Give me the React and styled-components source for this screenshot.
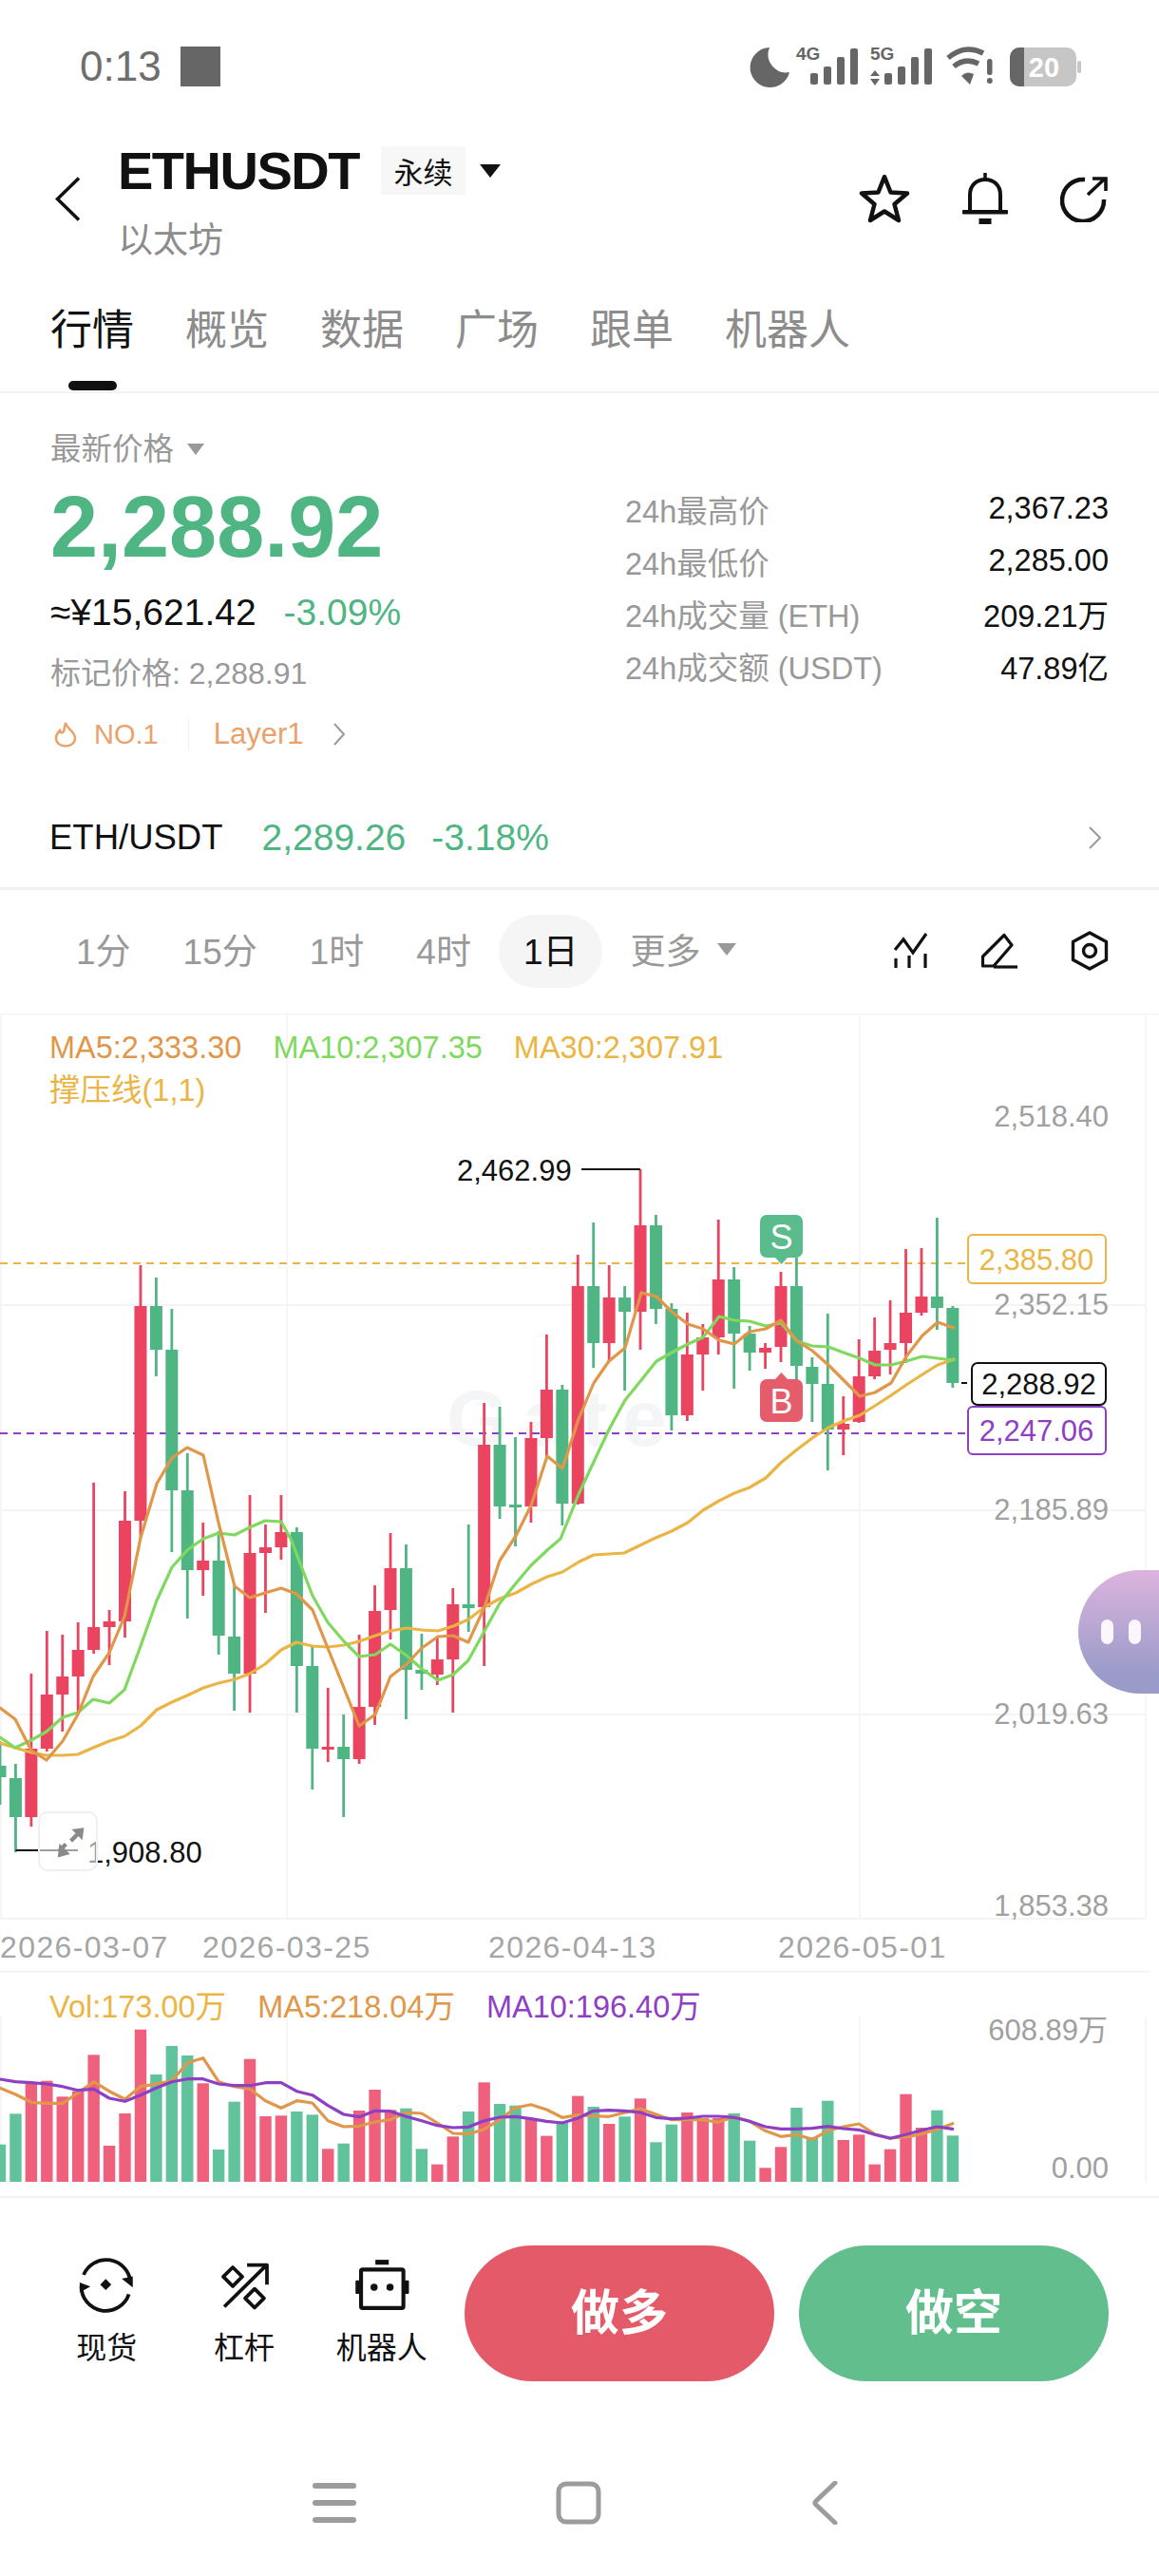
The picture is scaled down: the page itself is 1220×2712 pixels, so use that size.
import React from 'react';
import styled, { createGlobalStyle } from 'styled-components';

const FONT = '"Liberation Sans", "Noto Sans CJK SC", sans-serif';
const RED = '#eb4460';
const GREEN = '#4fb583';
const GRAY = '#999999';
const ORANGE = '#e0974a';
const LIME = '#7fd95f';
const YELLOW = '#ebb545';
const PURPLE = '#8e3fc4';
const STEP = 16.44;

// [colour, wick top, body top, body bottom, wick bottom], all in page pixels
const CANDLES = [
  ['g', 1833, 1859, 1871, 1900], ['g', 1857, 1872, 1913, 1950], ['r', 1762, 1841, 1913, 1923], ['r', 1717, 1784, 1841, 1844],
  ['r', 1721, 1765, 1784, 1823], ['r', 1708, 1737, 1765, 1802], ['r', 1561, 1713, 1737, 1741], ['r', 1695, 1707, 1713, 1753],
  ['r', 1570, 1601, 1707, 1724], ['r', 1332, 1375, 1601, 1619], ['g', 1345, 1375, 1421, 1449], ['g', 1378, 1421, 1569, 1634],
  ['g', 1530, 1569, 1653, 1704], ['r', 1603, 1643, 1653, 1680], ['g', 1612, 1643, 1722, 1742], ['g', 1670, 1723, 1762, 1801],
  ['r', 1574, 1635, 1762, 1803], ['r', 1605, 1629, 1635, 1698], ['r', 1574, 1613, 1629, 1642], ['g', 1608, 1613, 1754, 1803],
  ['g', 1733, 1754, 1841, 1884], ['r', 1777, 1839, 1842, 1855], ['g', 1805, 1839, 1852, 1913], ['r', 1721, 1797, 1852, 1857],
  ['r', 1669, 1696, 1797, 1816], ['r', 1614, 1651, 1695, 1726], ['g', 1626, 1651, 1758, 1810], ['g', 1720, 1758, 1762, 1779],
  ['r', 1723, 1747, 1763, 1774], ['r', 1672, 1689, 1747, 1803], ['g', 1605, 1689, 1693, 1718], ['r', 1477, 1521, 1692, 1754],
  ['g', 1481, 1521, 1586, 1599], ['g', 1513, 1584, 1587, 1628], ['r', 1497, 1514, 1586, 1603], ['r', 1405, 1463, 1514, 1535],
  ['g', 1458, 1463, 1583, 1606], ['r', 1321, 1354, 1583, 1584], ['g', 1287, 1354, 1414, 1440], ['r', 1332, 1366, 1414, 1433],
  ['g', 1354, 1366, 1381, 1464], ['r', 1231, 1290, 1381, 1421], ['g', 1279, 1290, 1378, 1394], ['g', 1372, 1378, 1490, 1506],
  ['r', 1382, 1426, 1490, 1496], ['r', 1394, 1408, 1426, 1464], ['r', 1284, 1347, 1408, 1426], ['g', 1334, 1347, 1404, 1462],
  ['g', 1396, 1404, 1424, 1443], ['r', 1414, 1419, 1424, 1441], ['r', 1339, 1354, 1418, 1434], ['g', 1324, 1354, 1438, 1453],
  ['g', 1429, 1439, 1457, 1497], ['g', 1383, 1457, 1505, 1548], ['r', 1470, 1499, 1505, 1532], ['r', 1410, 1449, 1497, 1498],
  ['r', 1387, 1422, 1449, 1452], ['r', 1369, 1414, 1421, 1447], ['r', 1315, 1382, 1414, 1435], ['r', 1314, 1365, 1382, 1385],
  ['g', 1282, 1365, 1377, 1400], ['g', 1375, 1377, 1456, 1461],
];

const MA5 = '0,1798 16,1810 33,1843 49,1853 66,1833 82,1805 98,1765 115,1740 131,1702 148,1619 165,1562 181,1535 197,1524 214,1532 230,1603 247,1670 263,1682 279,1677 296,1672 312,1678 329,1695 345,1735 362,1777 378,1817 395,1805 411,1765 428,1752 444,1735 461,1723 477,1722 493,1729 510,1692 526,1643 543,1617 559,1585 576,1533 592,1546 609,1494 625,1456 641,1433 658,1419 675,1361 691,1365 707,1381 724,1394 740,1399 757,1411 773,1415 789,1402 806,1399 822,1390 839,1412 855,1422 872,1437 888,1453 905,1470 921,1466 938,1456 954,1428 971,1406 987,1392 1004,1398';
const MA10 = '0,1829 16,1840 33,1832 49,1823 66,1808 82,1803 98,1789 115,1793 131,1779 148,1733 165,1685 181,1650 197,1632 214,1620 230,1614 247,1616 263,1608 279,1601 296,1602 306,1620 329,1680 345,1708 362,1728 378,1744 395,1742 411,1731 428,1743 444,1757 461,1769 477,1763 493,1748 510,1717 526,1688 543,1667 559,1648 576,1632 590,1620 610,1571 625,1539 641,1505 658,1474 675,1453 691,1433 707,1424 724,1415 740,1408 757,1386 773,1390 789,1391 806,1396 822,1393 839,1412 855,1417 872,1418 888,1424 905,1430 921,1437 938,1437 954,1433 971,1428 987,1430 1004,1432';
const MA30 = '0,1835 16,1840 33,1845 49,1848 66,1848 82,1847 98,1840 115,1833 131,1828 148,1817 165,1800 181,1792 197,1785 214,1777 230,1772 247,1768 263,1762 279,1752 296,1737 312,1729 329,1733 345,1734 362,1732 378,1728 395,1722 411,1717 428,1714 444,1716 461,1717 477,1712 493,1705 510,1692 526,1683 543,1677 559,1668 576,1660 592,1655 610,1644 625,1637 657,1635 688,1620 707,1612 724,1603 740,1590 757,1580 773,1572 789,1566 806,1556 822,1540 839,1526 855,1514 872,1503 888,1496 905,1490 921,1480 938,1469 954,1458 971,1447 987,1437 1004,1431';

// volume tops and averages as read from the crop, y offset from 2040 times three
const VOL = [653, 556, 458, 452, 502, 485, 370, 657, 555, 290, 432, 342, 372, 460, 669, 518, 383, 564, 562, 549, 559, 667, 650, 546, 480, 544, 539, 667, 716, 628, 549, 457, 525, 530, 570, 626, 580, 500, 534, 588, 565, 508, 646, 590, 552, 570, 570, 555, 641, 727, 661, 537, 630, 515, 639, 622, 716, 668, 494, 600, 545, 625];
const VOL_MA5 = [475, 495, 520, 523, 523, 490, 455, 485, 510, 470, 462, 452, 395, 380, 455, 470, 478, 515, 538, 515, 522, 578, 597, 595, 582, 575, 552, 555, 585, 618, 620, 605, 575, 537, 527, 543, 568, 560, 563, 565, 553, 540, 558, 575, 575, 575, 583, 565, 580, 610, 628, 622, 637, 610, 597, 588, 620, 633, 630, 620, 605, 587];
const VOL_MA10 = [447, 455, 458, 462, 470, 482, 478, 507, 517, 497, 475, 455, 446, 446, 462, 467, 467, 458, 458, 485, 497, 530, 558, 566, 547, 548, 565, 578, 593, 600, 598, 578, 567, 565, 572, 580, 585, 570, 547, 545, 547, 552, 568, 572, 570, 564, 564, 568, 580, 597, 604, 604, 602, 596, 603, 607, 622, 634, 622, 608, 597, 604];

const volY = (v) => 2040 + v / 3;
const volLine = (arr) => arr.map((v, i) => `${(i * STEP).toFixed(1)},${volY(v).toFixed(1)}`).join(' ');

const App = () => (
  <Page>
    <GlobalStyle />
    <StatusBar>
      <StatusLeft>
        <Clock>0:13</Clock>
        <StatusSquare />
      </StatusLeft>
      <StatusIcons />
    </StatusBar>

    <Header>
      <BackButton />
      <TitleBlock>
        <TitleRow>
          <Symbol>ETHUSDT</Symbol>
          <ContractTag>永续</ContractTag>
          <Caret $size={11} $color="#111" />
        </TitleRow>
        <SubTitle>以太坊</SubTitle>
      </TitleBlock>
      <HeaderActions>
        <StarIcon />
        <BellIcon />
        <ShareIcon />
      </HeaderActions>
    </Header>

    <Tabs>
      <Tab $active>行情</Tab>
      <Tab>概览</Tab>
      <Tab>数据</Tab>
      <Tab>广场</Tab>
      <Tab>跟单</Tab>
      <Tab>机器人</Tab>
    </Tabs>

    <PriceSection>
      <PriceLeft>
        <PriceCaption>
          最新价格
          <Caret $size={9} $color="#999" />
        </PriceCaption>
        <BigPrice>2,288.92</BigPrice>
        <FiatRow>
          <span>≈¥15,621.42</span>
          <Change>-3.09%</Change>
        </FiatRow>
        <MarkPrice>标记价格: 2,288.91</MarkPrice>
        <RankRow>
          <FlameIcon />
          <RankNo>NO.1</RankNo>
          <RankDivider />
          <span>Layer1</span>
          <RankChevron />
        </RankRow>
      </PriceLeft>
      <StatsList>
        <StatRow><span>24h最高价</span><StatValue>2,367.23</StatValue></StatRow>
        <StatRow><span>24h最低价</span><StatValue>2,285.00</StatValue></StatRow>
        <StatRow><span>24h成交量 (ETH)</span><StatValue>209.21万</StatValue></StatRow>
        <StatRow><span>24h成交额 (USDT)</span><StatValue>47.89亿</StatValue></StatRow>
      </StatsList>
    </PriceSection>

    <SpotRow>
      <SpotName>ETH/USDT</SpotName>
      <SpotPrice>2,289.26</SpotPrice>
      <SpotPrice>-3.18%</SpotPrice>
      <SpotChevron />
    </SpotRow>

    <IntervalRow>
      <Intervals>
        <Interval>1分</Interval>
        <Interval>15分</Interval>
        <Interval>1时</Interval>
        <Interval>4时</Interval>
        <Interval $active>1日</Interval>
        <Interval>
          更多
          <Caret $size={10} $color="#999" />
        </Interval>
      </Intervals>
      <ChartTools>
        <IndicatorIcon />
        <PencilIcon />
        <HexIcon />
      </ChartTools>
    </IntervalRow>

    <KlinePanel>
      <KlineChart />
      <KlineLegend>
        <LegendRow>
          <LegendItem $color={ORANGE}>MA5:2,333.30</LegendItem>
          <LegendItem $color={LIME}>MA10:2,307.35</LegendItem>
          <LegendItem $color={YELLOW}>MA30:2,307.91</LegendItem>
        </LegendRow>
        <LegendItem $color={YELLOW}>撑压线(1,1)</LegendItem>
      </KlineLegend>
      <ExpandButton>
        <svg width="38" height="38" viewBox="0 0 44 44">
          <path d="M41 5 L26 7 L39 20 Z M9 41 L24 37 L11 24 Z" fill="#8a8a8a" />
          <path d="M33 13 L25 21 M11 33 L19 25" stroke="#8a8a8a" strokeWidth="5" />
        </svg>
      </ExpandButton>
      <Assistant>
        <AssistantEye />
        <AssistantEye />
      </Assistant>
    </KlinePanel>

    <VolumePanel>
      <VolumeChart />
      <VolumeLegend>
        <VolumeItem $color={YELLOW}>Vol:173.00万</VolumeItem>
        <VolumeItem $color={ORANGE}>MA5:218.04万</VolumeItem>
        <VolumeItem $color={PURPLE}>MA10:196.40万</VolumeItem>
      </VolumeLegend>
    </VolumePanel>

    <BottomBar>
      <TradeTool>
        <SpotIcon />
        <TradeLabel>现货</TradeLabel>
      </TradeTool>
      <TradeTool>
        <LeverageIcon />
        <TradeLabel>杠杆</TradeLabel>
      </TradeTool>
      <TradeTool>
        <RobotIcon />
        <TradeLabel>机器人</TradeLabel>
      </TradeTool>
      <TradeButtons>
        <TradeButton $color="#e55a68">做多</TradeButton>
        <TradeButton $color="#62bf8d">做空</TradeButton>
      </TradeButtons>
    </BottomBar>

    <NavBar>
      <svg width="46" height="46" viewBox="0 0 46 46" fill="#9c9c9c">
        <rect y="2" width="46" height="6" rx="3" />
        <rect y="20" width="46" height="6" rx="3" />
        <rect y="38" width="46" height="6" rx="3" />
      </svg>
      <NavIcon $left={210} width="48" height="46" viewBox="0 0 48 46">
        <rect x="3" y="3" width="42" height="40" rx="8" fill="none" stroke="#9c9c9c" strokeWidth="5" />
      </NavIcon>
      <NavIcon $left={221} width="28" height="46" viewBox="0 0 28 46">
        <path d="M25 2 L5 21 Q3 23 5 25 L25 44" fill="none" stroke="#9c9c9c" strokeWidth="5" strokeLinecap="round" />
      </NavIcon>
    </NavBar>
  </Page>
);

export default App;

const KlineChart = () => (
  <ChartSvg width="1220" height="1008" viewBox="0 1067 1220 1008">
    <path d="M0 1067.5H1220 M0 1374H1206 M0 1590H1206 M0 1805H1206 M0 2020H1206" stroke="#f1f1f1" strokeWidth="1.5" />
    <path d="M1 1067V2020 M302 1067V2020 M905 1067V2020 M1206 1067V2020" stroke="#f3f3f3" strokeWidth="1.5" />
    <Watermark x="470" y="1522">Gate</Watermark>
    <path d="M0 1330H1016" stroke={YELLOW} strokeWidth="2" strokeDasharray="8 6" />
    <path d="M0 1509H1016" stroke={PURPLE} strokeWidth="2" strokeDasharray="8 6" />
    {CANDLES.map(([c, wt, bt, bb, wb], i) => (
      <g key={i} fill={c === 'r' ? RED : GREEN}>
        <rect x={i * STEP - 1.4} y={wt} width="2.8" height={wb - wt} />
        <rect x={i * STEP - 6.5} y={bt} width="13" height={Math.max(bb - bt, 3)} />
      </g>
    ))}
    <ChartLine points={MA30} stroke={YELLOW} />
    <ChartLine points={MA10} stroke={LIME} />
    <ChartLine points={MA5} stroke={ORANGE} />

    <path d="M612 1231H674" stroke="#111" strokeWidth="2" />
    <ChartText x="481" y="1232" fill="#111">2,462.99</ChartText>
    <path d="M16.5 1948H82" stroke="#111" strokeWidth="2" />
    <ChartText x="92" y="1950" fill="#111">1,908.80</ChartText>

    <rect x="800" y="1279" width="45" height="45" rx="7" fill="#5abb8c" />
    <path d="M816 1324H829L822.5 1331Z" fill="#5abb8c" />
    <BadgeText x="822.5" y="1302">S</BadgeText>
    <rect x="800" y="1452" width="45" height="45" rx="7" fill="#e55c6a" />
    <path d="M816 1452H829L822.5 1445Z" fill="#e55c6a" />
    <BadgeText x="822.5" y="1475">B</BadgeText>

    <AxisText x="1167" y="1175">2,518.40</AxisText>
    <AxisText x="1167" y="1373">2,352.15</AxisText>
    <AxisText x="1167" y="1589">2,185.89</AxisText>
    <AxisText x="1167" y="1804">2,019.63</AxisText>
    <AxisText x="1167" y="2006">1,853.38</AxisText>

    <rect x="1019" y="1300" width="145" height="51" rx="5" fill="#fff" stroke={YELLOW} strokeWidth="2" />
    <ChartText x="1091" y="1326" fill={YELLOW} textAnchor="middle">2,385.80</ChartText>
    <rect x="1019" y="1481" width="145" height="50" rx="5" fill="#fff" stroke={PURPLE} strokeWidth="2" />
    <ChartText x="1091" y="1506" fill={PURPLE} textAnchor="middle">2,247.06</ChartText>
    <path d="M1012 1456H1018" stroke="#111" strokeWidth="2" />
    <rect x="1023" y="1435" width="141" height="44" rx="6" fill="#fff" stroke="#111" strokeWidth="2" />
    <ChartText x="1093.5" y="1457" fill="#111" textAnchor="middle">2,288.92</ChartText>

    <DateText x="0" y="2050">2026-03-07</DateText>
    <DateText x="213" y="2050">2026-03-25</DateText>
    <DateText x="514" y="2050">2026-04-13</DateText>
    <DateText x="819" y="2050">2026-05-01</DateText>
  </ChartSvg>
);

const VolumeChart = () => (
  <ChartSvg width="1220" height="240" viewBox="0 2075 1220 240">
    <path d="M0 2075.5H1210 M0 2313H1220" stroke="#f1f1f1" strokeWidth="2" />
    <path d="M1 2123V2297 M302 2123V2297 M905 2123V2297 M1206 2123V2297" stroke="#f3f3f3" strokeWidth="1.5" />
    {VOL.map((v, i) => (
      <rect
        key={i}
        x={i * STEP - 6.2}
        y={volY(v)}
        width="12.4"
        height={2297 - volY(v)}
        fill={CANDLES[i][0] === 'r' ? '#ee607b' : '#60c39b'}
      />
    ))}
    <ChartLine points={volLine(VOL_MA5)} stroke={ORANGE} />
    <ChartLine points={volLine(VOL_MA10)} stroke={PURPLE} />
    <AxisText x="1166" y="2137">608.89万</AxisText>
    <AxisText x="1167" y="2282">0.00</AxisText>
  </ChartSvg>
);

const StatusIcons = () => (
  <svg width="352" height="52" viewBox="790 44 352 52" fill="#666">
    <path d="M812 50 A21 21 0 1 0 833 76 A19 19 0 0 1 812 50 Z" />
    <StatusText x="840" y="63">4G</StatusText>
    <rect x="855" y="77" width="8" height="12" rx="2" />
    <rect x="869" y="70" width="8" height="19" rx="2" />
    <rect x="883" y="60" width="8" height="29" rx="2" />
    <rect x="897" y="51" width="8" height="38" rx="2" />
    <StatusText x="918" y="63">5G</StatusText>
    <path d="M918 80L923 74L928 80Z M918 83L928 83L923 90Z" />
    <rect x="933" y="77" width="8" height="12" rx="2" />
    <rect x="947" y="70" width="8" height="19" rx="2" />
    <rect x="961" y="60" width="8" height="29" rx="2" />
    <rect x="975" y="51" width="8" height="38" rx="2" />
    <path d="M1000 61 Q1018 46 1037 56" fill="none" stroke="#666" strokeWidth="5.5" />
    <path d="M1006 70 Q1018 60 1032 67" fill="none" stroke="#666" strokeWidth="5.5" />
    <path d="M1014 80 Q1020 74 1027 78 L1023 89 Z" />
    <rect x="1041" y="62" width="5.5" height="17" rx="2.5" />
    <circle cx="1043.8" cy="85" r="3" />
    <rect x="1065" y="50" width="70" height="41" rx="10" fill="#c6c6c6" />
    <rect x="1136" y="64" width="4" height="13" rx="2" fill="#c6c6c6" />
    <path d="M1075 50H1080V91H1075A10 10 0 0 1 1065 81V60A10 10 0 0 1 1075 50Z" />
    <BatteryText x="1101" y="81" textAnchor="middle">20</BatteryText>
  </svg>
);

const BackButton = () => (
  <BackSvg width="26" height="47" viewBox="0 0 26 47">
    <path d="M25 1.5 L2.5 23.5 L25 45.5" fill="none" stroke="#111" strokeWidth="3.5" />
  </BackSvg>
);

const StarIcon = () => (
  <svg width="54" height="52" viewBox="0 0 54 52">
    <path d="M27 3 L33.5 19.5 L51 20.5 L37.5 32 L42 49 L27 39.5 L12 49 L16.5 32 L3 20.5 L20.5 19.5 Z" fill="none" stroke="#111" strokeWidth="4.5" strokeLinejoin="round" />
  </svg>
);

const BellIcon = () => (
  <svg width="48" height="54" viewBox="0 0 48 54">
    <path d="M8 41 V23 C8 13 15 7 24 7 C33 7 40 13 40 23 V41" fill="none" stroke="#111" strokeWidth="4" />
    <path d="M24 0V8" stroke="#111" strokeWidth="3.5" />
    <rect y="39" width="48" height="4.5" rx="1" fill="#111" />
    <rect x="17.5" y="48" width="13" height="6" fill="#111" />
  </svg>
);

const ShareIcon = () => (
  <svg width="50" height="50" viewBox="0 0 50 50">
    <path d="M26 5 A22 22 0 1 0 46 26" fill="none" stroke="#111" strokeWidth="4.5" />
    <path d="M29 21 L47 4 M34 4 H48 V17" fill="none" stroke="#111" strokeWidth="3.6" />
  </svg>
);

const FlameIcon = () => (
  <svg width="24" height="28" viewBox="0 0 24 28">
    <path d="M12 2 C13 8 22 11 22 18 C22 23 18 26.5 12 26.5 C6 26.5 2 23 2 18 C2 14 4 12 6 10 C7 13 9 13 10 11 C11 8 11 5 12 2 Z" fill="none" stroke="#e9a26b" strokeWidth="2.5" />
  </svg>
);

const RankChevron = () => (
  <ChevronSvg width="14" height="24" viewBox="0 0 14 24" $left={31}>
    <path d="M2 1 L12 12 L2 23" fill="none" stroke="#999" strokeWidth="2" />
  </ChevronSvg>
);

const SpotChevron = () => (
  <SpotChevronSvg width="15" height="24" viewBox="0 0 15 24">
    <path d="M2 1 L13 12 L2 23" fill="none" stroke="#999" strokeWidth="2" />
  </SpotChevronSvg>
);

const IndicatorIcon = () => (
  <svg width="36" height="38" viewBox="0 0 36 38" fill="none" stroke="#111" strokeWidth="3.2">
    <path d="M1 18 L10 7 L20 21 L34 1" />
    <path d="M2 27V37 M16 24V37 M33 22V37" />
  </svg>
);

const PencilIcon = () => (
  <svg width="40" height="38" viewBox="0 0 40 38" fill="none" stroke="#111" strokeWidth="3.2">
    <path d="M2.5 33 V25 L25 2.5 L33 13 L14 35 H2.5 Z" strokeLinejoin="round" />
    <path d="M14 36 H39" />
  </svg>
);

const HexIcon = () => (
  <svg width="40" height="42" viewBox="0 0 40 42" fill="none" stroke="#111" strokeWidth="3.4">
    <path d="M20 2 L37.5 11.5 V30.5 L20 40 L2.5 30.5 V11.5 Z" strokeLinejoin="round" />
    <circle cx="20" cy="21" r="6.5" />
  </svg>
);

const SpotIcon = () => (
  <TradeIcon viewBox="35 30 180 175">
    <path d="M55 88 A75 75 0 0 1 199 112" fill="none" stroke="#111" strokeWidth="11" />
    <path d="M172 100 L206 93 L206 127 Z" fill="#111" />
    <path d="M194 148 A75 75 0 0 1 48 124" fill="none" stroke="#111" strokeWidth="11" />
    <path d="M43 112 L76 124 L43 142 Z" fill="#111" />
    <path d="M123 101 L140 118 L123 135 L106 118 Z" fill="#111" />
  </TradeIcon>
);

const LeverageIcon = () => (
  <TradeIcon viewBox="465 30 180 175">
    <g fill="none" stroke="#111" strokeWidth="11" strokeLinejoin="round">
      <path d="M520 65 L549 94 L520 123 L491 94 Z" />
      <path d="M587 131 L616 160 L587 189 L558 160 Z" />
      <path d="M494 186 L624 58 M564 58 H625 V118" />
    </g>
  </TradeIcon>
);

const RobotIcon = () => (
  <TradeIcon viewBox="910 30 180 175">
    <rect x="936" y="72" width="130" height="118" rx="5" fill="none" stroke="#111" strokeWidth="12" />
    <rect x="980" y="42" width="41" height="15" fill="#111" />
    <rect x="919" y="105" width="13" height="42" rx="3" fill="#111" />
    <rect x="1070" y="105" width="13" height="42" rx="3" fill="#111" />
    <circle cx="976" cy="126" r="11" fill="#111" />
    <circle cx="1025" cy="126" r="11" fill="#111" />
  </TradeIcon>
);

const GlobalStyle = createGlobalStyle`
  html, body {
    margin: 0;
    padding: 0;
    background: #fff;
  }
`;

const Page = styled.div`
  width: 1220px;
  height: 2712px;
  overflow: hidden;
  display: flex;
  flex-direction: column;
  background: #fff;
  font-family: ${FONT};
  color: #111;
`;

const StatusBar = styled.div`
  height: 142px;
  display: flex;
  align-items: flex-start;
  justify-content: space-between;
  padding: 44px 80px 0 84px;
  box-sizing: border-box;
`;

const StatusLeft = styled.div`
  display: flex;
  align-items: center;
  gap: 20px;
  height: 52px;
`;

const Clock = styled.span`
  font-size: 44px;
  line-height: 52px;
  color: #6e6e6e;
`;

const StatusSquare = styled.div`
  width: 42px;
  height: 42px;
  background: #666;
`;

const StatusText = styled.text`
  font-family: ${FONT};
  font-size: 19px;
  font-weight: 700;
`;

const BatteryText = styled.text`
  font-family: ${FONT};
  font-size: 29px;
  font-weight: 700;
  fill: #fff;
`;

const Header = styled.div`
  height: 134px;
  display: flex;
  align-items: center;
  padding: 0 54px 0 58px;
`;

const BackSvg = styled.svg`
  margin-right: 40px;
  flex-shrink: 0;
`;

const TitleBlock = styled.div`
  display: flex;
  flex-direction: column;
  gap: 24px;
  padding-top: 3px;
`;

const TitleRow = styled.div`
  display: flex;
  align-items: center;
  height: 62px;
`;

const Symbol = styled.span`
  font-size: 56px;
  line-height: 62px;
  font-weight: 700;
  letter-spacing: -1.5px;
  margin-right: 23px;
`;

const ContractTag = styled.span`
  width: 89px;
  height: 51px;
  display: flex;
  align-items: center;
  justify-content: center;
  background: #f7f7f7;
  font-size: 31px;
  margin-right: 15px;
`;

const Caret = styled.i`
  display: inline-block;
  width: 0;
  height: 0;
  border-left: ${(p) => p.$size}px solid transparent;
  border-right: ${(p) => p.$size}px solid transparent;
  border-top: ${(p) => p.$size * 1.35}px solid ${(p) => p.$color};
`;

const SubTitle = styled.span`
  font-size: 37px;
  line-height: 38px;
  color: #8c8c8c;
`;

const HeaderActions = styled.div`
  margin-left: auto;
  display: flex;
  align-items: center;
  gap: 55px;
`;

const Tabs = styled.div`
  height: 138px;
  box-sizing: border-box;
  display: flex;
  gap: 54px;
  padding: 47px 0 0 53px;
  border-bottom: 2px solid #f2f2f2;
`;

const Tab = styled.span`
  position: relative;
  height: 50px;
  font-size: 44px;
  line-height: 50px;
  color: ${(p) => (p.$active ? '#111' : '#8c8c8c')};

  &::after {
    content: '';
    display: ${(p) => (p.$active ? 'block' : 'none')};
    position: absolute;
    left: 19px;
    top: 78px;
    width: 51px;
    height: 10px;
    border-radius: 5px;
    background: #111;
  }
`;

const PriceSection = styled.div`
  height: 426px;
  display: flex;
`;

const PriceLeft = styled.div`
  width: 658px;
  box-sizing: border-box;
  padding: 39px 0 0 53px;
  display: flex;
  flex-direction: column;
`;

const PriceCaption = styled.div`
  display: flex;
  align-items: center;
  gap: 14px;
  font-size: 32.5px;
  line-height: 40px;
  color: ${GRAY};
`;

const BigPrice = styled.div`
  margin-top: 17px;
  font-size: 90px;
  line-height: 90px;
  font-weight: 700;
  color: ${GREEN};
`;

const FiatRow = styled.div`
  margin-top: 20px;
  display: flex;
  gap: 29px;
  font-size: 39px;
  line-height: 50px;
`;

const Change = styled.span`
  color: ${GREEN};
`;

const MarkPrice = styled.div`
  margin-top: 19px;
  font-size: 32px;
  line-height: 40px;
  color: ${GRAY};
`;

const RankRow = styled.div`
  margin-top: 24px;
  display: flex;
  align-items: center;
  font-size: 31px;
  line-height: 40px;
  color: #e9a26b;

  svg:first-child {
    margin: 0 18px 0 4px;
  }
`;

const RankNo = styled.span`
  font-size: 29px;
`;

const RankDivider = styled.i`
  width: 1px;
  height: 32px;
  margin: 0 26px 0 31px;
  background: #eeeeee;
`;

const ChevronSvg = styled.svg`
  margin-left: ${(p) => p.$left}px;
`;

const StatsList = styled.div`
  width: 509px;
  padding-top: 94px;
`;

const StatRow = styled.div`
  height: 55px;
  display: flex;
  align-items: center;
  justify-content: space-between;
  font-size: 32.5px;
  color: ${GRAY};
`;

const StatValue = styled.span`
  color: #111;
`;

const SpotRow = styled.div`
  height: 97px;
  box-sizing: border-box;
  display: flex;
  align-items: center;
  padding: 0 60px 10px 52px;
  gap: 27px;
  border-bottom: 3px solid #f2f2f2;
`;

const SpotName = styled.span`
  font-size: 36.5px;
  margin-right: 14px;
`;

const SpotPrice = styled.span`
  font-size: 39px;
  color: ${GREEN};
`;

const SpotChevronSvg = styled.svg`
  margin-left: auto;
`;

const IntervalRow = styled.div`
  height: 130px;
  display: flex;
  align-items: center;
  justify-content: space-between;
  padding: 0 53px 2px 54px;
  box-sizing: border-box;
`;

const Intervals = styled.div`
  display: flex;
  align-items: center;
  gap: 3px;
`;

const Interval = styled.div`
  height: 77px;
  box-sizing: border-box;
  padding: 0 26px 4px;
  display: flex;
  align-items: center;
  gap: 18px;
  border-radius: 39px;
  font-size: 37px;
  color: ${(p) => (p.$active ? '#111' : GRAY)};
  background: ${(p) => (p.$active ? '#f5f5f5' : 'transparent')};
`;

const ChartTools = styled.div`
  display: flex;
  align-items: center;
  gap: 55px;
`;

const KlinePanel = styled.div`
  position: relative;
  height: 1008px;
`;

const ChartSvg = styled.svg`
  display: block;
`;

const ChartLine = styled.polyline`
  fill: none;
  stroke-width: 3.2;
  stroke-linejoin: round;
  stroke-linecap: round;
`;

const ChartText = styled.text`
  font-family: ${FONT};
  font-size: 31px;
  dominant-baseline: central;
`;

const BadgeText = styled(ChartText)`
  font-size: 36px;
  fill: #fff;
  text-anchor: middle;
`;

const AxisText = styled(ChartText)`
  fill: #a0a0a0;
  text-anchor: end;
`;

const DateText = styled(ChartText)`
  fill: #a5a5a5;
  font-size: 32px;
  letter-spacing: 1.4px;
`;

const Watermark = styled.text`
  font-family: ${FONT};
  font-size: 84px;
  font-weight: 700;
  letter-spacing: 15px;
  fill: #f4f5f6;
`;

const KlineLegend = styled.div`
  position: absolute;
  left: 52px;
  top: 19px;
  display: flex;
  flex-direction: column;
  gap: 11px;
`;

const LegendRow = styled.div`
  display: flex;
  gap: 33px;
`;

const LegendItem = styled.span`
  font-size: 32.5px;
  line-height: 34px;
  color: ${(p) => p.$color};
`;

const ExpandButton = styled.div`
  position: absolute;
  left: 40px;
  top: 840px;
  width: 63px;
  height: 63px;
  box-sizing: border-box;
  display: flex;
  align-items: center;
  justify-content: center;
  background: rgba(255, 255, 255, 0.6);
  border: 2px solid #efefef;
  border-radius: 10px;
`;

const Assistant = styled.div`
  position: absolute;
  right: 0;
  top: 586px;
  width: 85px;
  height: 130px;
  box-sizing: border-box;
  padding-left: 24px;
  display: flex;
  align-items: center;
  gap: 16px;
  border-radius: 65px 0 0 65px;
  background: linear-gradient(180deg, #dcb4de 0%, #9a9bc9 85%);
`;

const AssistantEye = styled.i`
  width: 13px;
  height: 26px;
  border-radius: 7px;
  background: #fbf6fb;
`;

const VolumePanel = styled.div`
  position: relative;
  height: 240px;
`;

const VolumeLegend = styled.div`
  position: absolute;
  left: 52px;
  top: 20px;
  display: flex;
  gap: 33px;
`;

const VolumeItem = styled.span`
  font-size: 32.5px;
  line-height: 36px;
  color: ${(p) => p.$color};
`;

const BottomBar = styled.div`
  height: 240px;
  box-sizing: border-box;
  padding: 49px 53px 0 40px;
  display: flex;
  align-items: flex-start;
`;

const TradeTool = styled.div`
  width: 145px;
  display: flex;
  flex-direction: column;
  align-items: center;
  padding-top: 11px;
`;

const TradeIcon = styled.svg`
  width: 62px;
  height: 60px;
`;

const TradeLabel = styled.span`
  margin-top: 19px;
  font-size: 32px;
  line-height: 36px;
`;

const TradeButtons = styled.div`
  margin-left: 15px;
  display: flex;
  gap: 26px;
`;

const TradeButton = styled.div`
  width: 326px;
  height: 143px;
  box-sizing: border-box;
  padding-bottom: 10px;
  display: flex;
  align-items: center;
  justify-content: center;
  border-radius: 72px;
  background: ${(p) => p.$color};
  color: #fff;
  font-size: 51px;
  font-weight: 700;
`;

const NavBar = styled.div`
  padding: 57px 0 0 329px;
  display: flex;
  align-items: flex-start;
`;

const NavIcon = styled.svg`
  margin-left: ${(p) => p.$left}px;
`;
